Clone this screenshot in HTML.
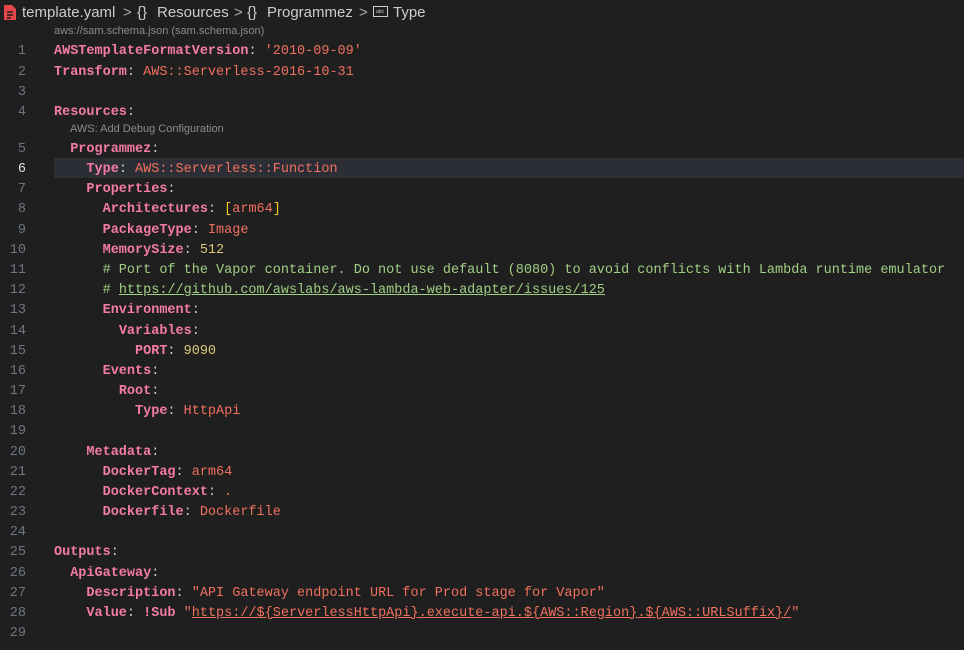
<!DOCTYPE html>
<html><head><meta charset="utf-8"><style>
body{margin:0;width:964px;height:650px;background:#1f1f1f;overflow:hidden;position:relative;font-family:"Liberation Mono",monospace;}
.bc{position:absolute;left:0;top:0;height:24px;width:964px;font-family:"Liberation Sans",sans-serif;font-size:15px;color:#cccccc;}
.bc span{position:absolute;top:4px;}
.cl{position:absolute;font-family:"Liberation Sans",sans-serif;font-size:11px;color:#8b8b8b;}
.ln{position:absolute;left:0;width:26px;text-align:right;font-size:13.5px;color:#6e7681;line-height:20px;margin-top:2px;}
.c{position:absolute;left:54px;font-size:13.5px;line-height:20px;white-space:pre;color:#cccccc;margin-top:2px;}
.k{color:#f47ba8;font-weight:bold}
.s{color:#f0705f}
.n{color:#d9c87a}
.g{color:#9fcf83}
.y{color:#f5c518}
.u{text-decoration:underline}
.hl{position:absolute;left:54px;top:158px;width:910px;height:20px;background:#2b2e34;}
</style></head><body>
<div class="bc">
<svg style="position:absolute;left:3px;top:4px" width="14" height="17" viewBox="0 0 14 17"><path d="M1 1h8l4 4v11H1z" fill="#e8474a"/><path d="M4 8h6M4 11h6M4 14h4" stroke="#1f1f1f" stroke-width="1.6"/></svg>
<span style="left:22px">template.yaml</span><span style="left:123px;color:#aaa">&gt;</span>
<span style="left:137px">{}</span><span style="left:157px">Resources</span><span style="left:234px;color:#aaa">&gt;</span>
<span style="left:247px">{}</span><span style="left:267px">Programmez</span><span style="left:359px;color:#aaa">&gt;</span>
<svg style="position:absolute;left:373px;top:6px" width="15" height="11"><rect x="0.5" y="0.5" width="14" height="10" fill="none" stroke="#ccc"/><text x="3" y="7" font-size="5" fill="#ccc" font-family="Liberation Sans">abc</text></svg>
<span style="left:393px">Type</span>
</div>
<div class="cl" style="left:54px;top:25px">aws://sam.schema.json (sam.schema.json)</div>
<div class="cl" style="left:70px;top:123px">AWS: Add Debug Configuration</div>
<div class="hl"></div>

<div class="ln" style="top:40px">1</div><div class="c" style="top:40px"><span class="k">AWSTemplateFormatVersion</span>: <span class="s">'2010-09-09'</span></div>
<div class="ln" style="top:61px">2</div><div class="c" style="top:61px"><span class="k">Transform</span>: <span class="s">AWS::Serverless-2016-10-31</span></div>
<div class="ln" style="top:81px">3</div>
<div class="ln" style="top:101px">4</div><div class="c" style="top:101px"><span class="k">Resources</span>:</div>
<div class="ln" style="top:138px">5</div><div class="c" style="top:138px">  <span class="k">Programmez</span>:</div>
<div class="ln" style="top:158px;color:#e0e0e0">6</div><div class="c" style="top:158px">    <span class="k">Type</span>: <span class="s">AWS::Serverless::Function</span></div>
<div class="ln" style="top:178px">7</div><div class="c" style="top:178px">    <span class="k">Properties</span>:</div>
<div class="ln" style="top:198px">8</div><div class="c" style="top:198px">      <span class="k">Architectures</span>: <span class="y">[</span><span class="s">arm64</span><span class="y">]</span></div>
<div class="ln" style="top:219px">9</div><div class="c" style="top:219px">      <span class="k">PackageType</span>: <span class="s">Image</span></div>
<div class="ln" style="top:239px">10</div><div class="c" style="top:239px">      <span class="k">MemorySize</span>: <span class="n">512</span></div>
<div class="ln" style="top:259px">11</div><div class="c" style="top:259px">      <span class="g"># Port of the Vapor container. Do not use default (8080) to avoid conflicts with Lambda runtime emulator</span></div>
<div class="ln" style="top:279px">12</div><div class="c" style="top:279px">      <span class="g"># <span class="u">https://github.com/awslabs/aws-lambda-web-adapter/issues/125</span></span></div>
<div class="ln" style="top:299px">13</div><div class="c" style="top:299px">      <span class="k">Environment</span>:</div>
<div class="ln" style="top:320px">14</div><div class="c" style="top:320px">        <span class="k">Variables</span>:</div>
<div class="ln" style="top:340px">15</div><div class="c" style="top:340px">          <span class="k">PORT</span>: <span class="n">9090</span></div>
<div class="ln" style="top:360px">16</div><div class="c" style="top:360px">      <span class="k">Events</span>:</div>
<div class="ln" style="top:380px">17</div><div class="c" style="top:380px">        <span class="k">Root</span>:</div>
<div class="ln" style="top:400px">18</div><div class="c" style="top:400px">          <span class="k">Type</span>: <span class="s">HttpApi</span></div>
<div class="ln" style="top:420px">19</div>
<div class="ln" style="top:441px">20</div><div class="c" style="top:441px">    <span class="k">Metadata</span>:</div>
<div class="ln" style="top:461px">21</div><div class="c" style="top:461px">      <span class="k">DockerTag</span>: <span class="s">arm64</span></div>
<div class="ln" style="top:481px">22</div><div class="c" style="top:481px">      <span class="k">DockerContext</span>: <span class="s">.</span></div>
<div class="ln" style="top:501px">23</div><div class="c" style="top:501px">      <span class="k">Dockerfile</span>: <span class="s">Dockerfile</span></div>
<div class="ln" style="top:521px">24</div>
<div class="ln" style="top:541px">25</div><div class="c" style="top:541px"><span class="k">Outputs</span>:</div>
<div class="ln" style="top:562px">26</div><div class="c" style="top:562px">  <span class="k">ApiGateway</span>:</div>
<div class="ln" style="top:582px">27</div><div class="c" style="top:582px">    <span class="k">Description</span>: <span class="s">"API Gateway endpoint URL for Prod stage for Vapor"</span></div>
<div class="ln" style="top:602px">28</div><div class="c" style="top:602px">    <span class="k">Value</span>: <span class="k">!Sub</span> <span class="s">"<span class="u">https://${ServerlessHttpApi}.execute-api.${AWS::Region}.${AWS::URLSuffix}/</span>"</span></div>
<div class="ln" style="top:622px">29</div>
</body></html>
